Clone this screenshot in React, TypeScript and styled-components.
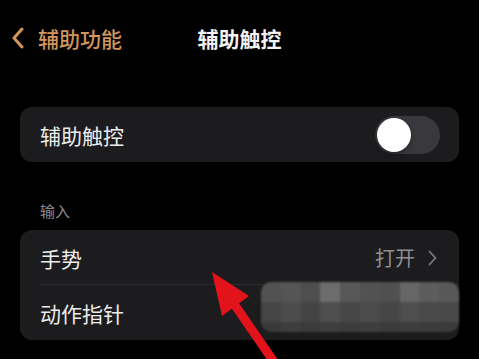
import React from "react";
import styled, { createGlobalStyle } from "styled-components";

const Global = createGlobalStyle`
  html, body { margin: 0; padding: 0; background: #000; }
  body { font-family: "Noto Sans CJK SC", "Noto Sans", sans-serif; color: #fff; }
`;

const Screen = styled.div`
  position: relative;
  width: 479px;
  height: 359px;
  overflow: hidden;
  background: #000;
`;

const Header = styled.header`
  display: grid;
  grid-template-columns: 1fr auto 1fr;
  align-items: center;
  height: 76px;
  padding: 0 12px;
  box-sizing: border-box;
`;

const Back = styled.div`
  display: flex;
  align-items: center;
  gap: 14px;
  color: #d3955a;
  font-size: 21px;
  line-height: 28px;
  font-weight: 500;
`;

const Title = styled.div`
  font-size: 21px;
  line-height: 28px;
  font-weight: 600;
  color: #f2f2f2;
`;

const Content = styled.main`
  display: flex;
  flex-direction: column;
  padding: 0 20px 0 20px;
`;

const Card = styled.section<{ $mt: number }>`
  position: relative;
  margin-top: ${(p) => p.$mt}px;
  background: #1c1c1e;
  border-radius: 12px;
  display: flex;
  flex-direction: column;
`;

const Row = styled.div<{ $divider?: boolean }>`
  position: relative;
  height: 55px;
  display: flex;
  align-items: center;
  justify-content: space-between;
  padding: 0 19px 0 20px;
  font-size: 21px;
  color: #ececec;
  &::after {
    content: "";
    display: ${(p) => (p.$divider ? "block" : "none")};
    position: absolute;
    left: 20px;
    right: 0;
    bottom: 0;
    height: 1px;
    background: #2c2c2e;
  }
`;

const Label = styled.div`
  margin-top: 39px;
  padding-left: 20px;
  font-size: 15px;
  line-height: 20px;
  color: #8a8a8e;
`;

const Track = styled.div`
  width: 65px;
  height: 38px;
  border-radius: 19px;
  background: #39393d;
  display: flex;
  align-items: center;
  padding: 0 2px;
  box-sizing: border-box;
`;

const Knob = styled.div`
  width: 34px;
  height: 34px;
  border-radius: 50%;
  background: #fff;
  box-shadow: 0 2px 4px rgba(0, 0, 0, 0.4);
`;

const Detail = styled.div`
  display: flex;
  align-items: center;
  gap: 13px;
  margin-right: 3px;
  color: #8e8e93;
  font-size: 20px;
`;

const Mosaic = styled.div`
  position: absolute;
  right: 0;
  top: 52px;
  width: 198px;
  height: 50px;
  border-radius: 10px;
  overflow: hidden;
  display: grid;
  grid-template-columns: repeat(10, 1fr);
  grid-template-rows: 20px 20px 10px;
  filter: blur(1px);
`;

const Tile = styled.div``;

const Overlay = styled.svg`
  position: absolute;
  left: 0;
  top: 0;
  pointer-events: none;
`;

const tiles = [
  "#525252", "#555555", "#4e4e4e", "#6c6c6c", "#575757", "#525252", "#505050", "#666666", "#5c5c5c", "#585858",
  "#454545", "#4c4c4c", "#444444", "#4f4f4f", "#474747", "#4c4c4c", "#464646", "#4e4e4e", "#4a4a4a", "#484848",
  "#3a3a3a", "#3e3e3e", "#3b3b3b", "#3f3f3f", "#3c3c3c", "#3e3e3e", "#3b3b3b", "#3d3d3d", "#3c3c3c", "#3b3b3b",
];

export default function App() {
  return (
    <Screen>
      <Global />
      <Header>
        <Back>
          <svg width="12" height="22" viewBox="0 0 12 22">
            <path d="M10 2 L2 11 L10 20" fill="none" stroke="#d3955a" strokeWidth="3" strokeLinecap="round" strokeLinejoin="round" />
          </svg>
          <span>辅助功能</span>
        </Back>
        <Title>辅助触控</Title>
        <div />
      </Header>
      <Content>
        <Card $mt={31}>
          <Row>
            <span>辅助触控</span>
            <Track>
              <Knob />
            </Track>
          </Row>
        </Card>
        <Label>输入</Label>
        <Card $mt={9}>
          <Row $divider>
            <span>手势</span>
            <Detail>
              <span>打开</span>
              <svg width="9" height="16" viewBox="0 0 9 16">
                <path d="M1.5 1.5 L7.5 8 L1.5 14.5" fill="none" stroke="#7c7c80" strokeWidth="1.8" strokeLinecap="round" strokeLinejoin="round" />
              </svg>
            </Detail>
          </Row>
          <Row>
            <span>动作指针</span>
          </Row>
          <Mosaic>
            {tiles.map((c, i) => (
              <Tile key={i} style={{ background: c }} />
            ))}
          </Mosaic>
        </Card>
      </Content>
      <Overlay width="479" height="359" viewBox="0 0 479 359">
        <line x1="274" y1="362" x2="230" y2="298" stroke="#e3131b" strokeWidth="9" />
        <polygon points="212,272 249,296 222,316" fill="#e3131b" />
      </Overlay>
    </Screen>
  );
}
